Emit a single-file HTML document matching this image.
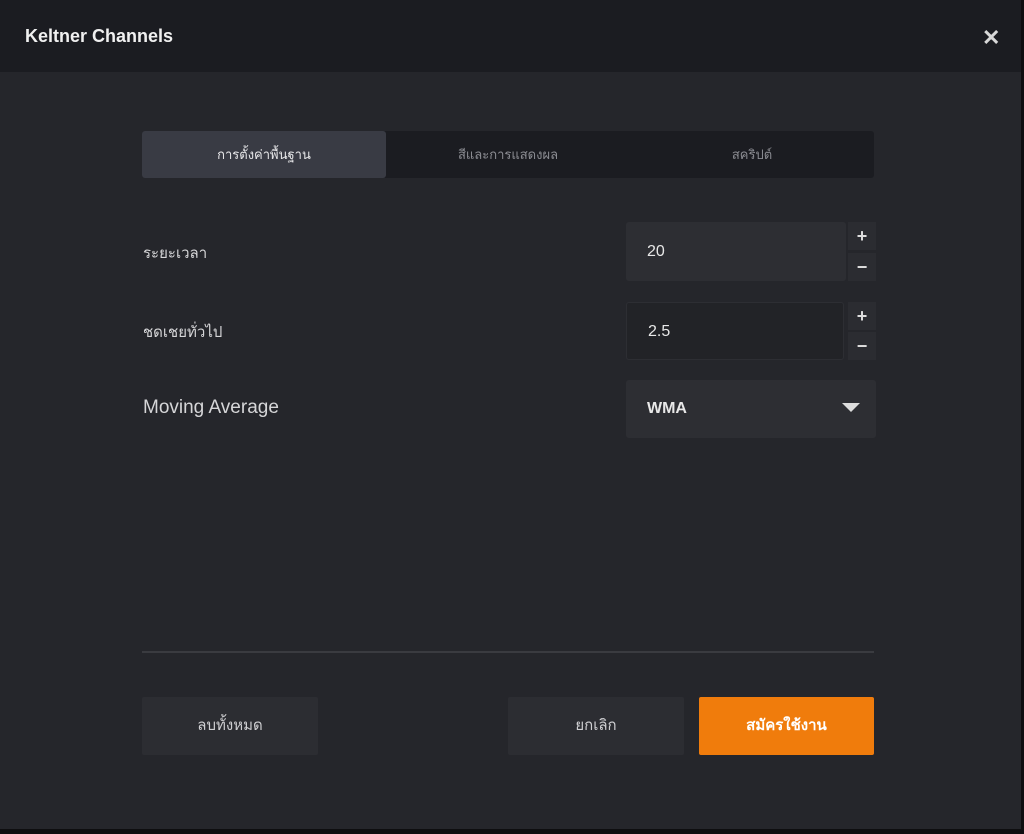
<!DOCTYPE html><html><head><meta charset="utf-8"><style>
*{margin:0;padding:0;box-sizing:border-box}
body{width:1024px;height:834px;background:#0e0e10;font-family:"Liberation Sans","Noto Sans CJK SC",sans-serif;position:relative;overflow:hidden;color:#e4e4e6}
.main{position:absolute;left:0;top:0;width:1021px;height:829px;background:#25262b}
.hdr{position:absolute;left:0;top:0;width:1021px;height:72px;background:#1b1c21}
.t{position:absolute;left:25px;top:26px;font-size:18px;font-weight:bold;color:#f0f0f0}
.x{position:absolute;left:982px;top:25px;font-size:22px;font-weight:bold;color:#d8d8d8}
.a{position:absolute}
.tabs{left:142px;top:131px;width:732px;height:47px;background:#1b1c21;border-radius:3px}
.tab{position:absolute;top:0;height:47px;line-height:47px;text-align:center;font-size:13px;color:#8b8c92}
.lbl{position:absolute;left:143px;font-size:15px;color:#d6d6d8}
.in{background:#2d2e33;border-radius:3px;font-size:16px;color:#e8e8e8;padding-left:21px}
.pm{background:#2b2c31;width:28px;height:28px;text-align:center;font-size:18px;font-weight:bold;color:#ddd;line-height:28px}
.btn{height:58px;line-height:58px;text-align:center;font-size:15px;border-radius:2px}
</style></head><body>
<div class="main"></div>
<div class="hdr"><div class="t">Keltner Channels</div><div class="x">✕</div></div>
<div class="a tabs">
<div class="tab" style="left:0;width:244px;background:#393b44;color:#e6e6e8;border-radius:3px">การตั้งค่าพื้นฐาน</div>
<div class="tab" style="left:244px;width:244px">สีและการแสดงผล</div>
<div class="tab" style="left:488px;width:244px">สคริปต์</div>
</div>
<div class="lbl" style="top:241px">ระยะเวลา</div>
<div class="a in" style="left:626px;top:222px;width:220px;height:59px;line-height:59px">20</div>
<div class="a pm" style="left:848px;top:222px">+</div>
<div class="a pm" style="left:848px;top:253px">−</div>
<div class="lbl" style="top:320px">ชดเชยทั่วไป</div>
<div class="a in" style="left:626px;top:302px;width:218px;height:58px;line-height:58px;background:#222327;border:1px solid #2d2e33">2.5</div>
<div class="a pm" style="left:848px;top:302px">+</div>
<div class="a pm" style="left:848px;top:332px">−</div>
<div class="lbl" style="top:397px;font-size:19px">Moving Average</div>
<div class="a in" style="left:626px;top:380px;width:250px;height:58px;line-height:58px;font-weight:bold;font-size:16px">WMA</div>
<svg class="a" style="left:842px;top:403px" width="18" height="10"><path d="M0 0H18L9 9Z" fill="#ddd"/></svg>
<div class="a" style="left:142px;top:651px;width:732px;height:2px;background:#3a3b40"></div>
<div class="a btn" style="left:142px;top:697px;width:176px;background:#2c2d32;color:#cfcfd2">ลบทั้งหมด</div>
<div class="a btn" style="left:508px;top:697px;width:176px;background:#2c2d32;color:#cfcfd2">ยกเลิก</div>
<div class="a btn" style="left:699px;top:697px;width:175px;background:#f07c0c;color:#fff;font-weight:bold">สมัครใช้งาน</div>
</body></html>
